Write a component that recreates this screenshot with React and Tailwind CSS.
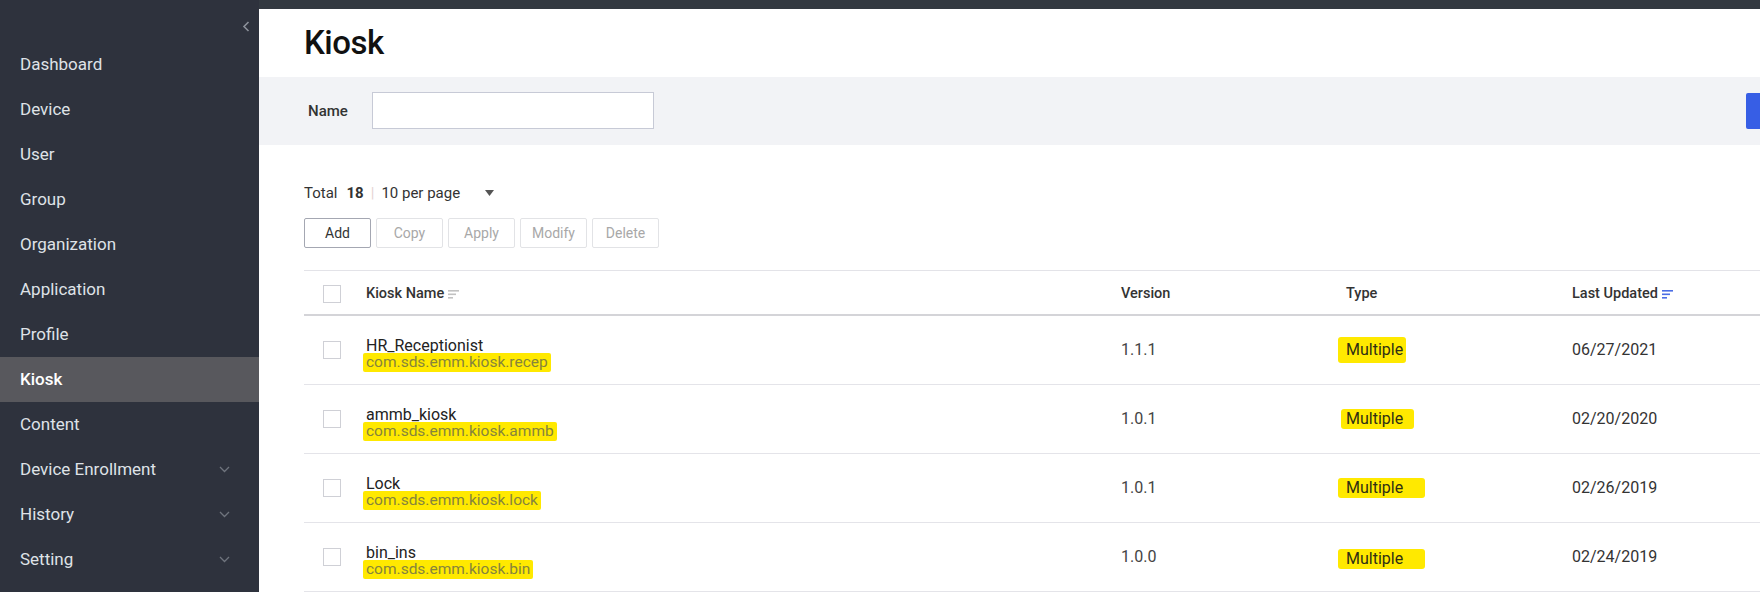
import React from 'react'

const menu = [
  { label: 'Dashboard' },
  { label: 'Device' },
  { label: 'User' },
  { label: 'Group' },
  { label: 'Organization' },
  { label: 'Application' },
  { label: 'Profile' },
  { label: 'Kiosk', active: true },
  { label: 'Content' },
  { label: 'Device Enrollment', sub: true },
  { label: 'History', sub: true },
  { label: 'Setting', sub: true },
]

// hl: marker highlight around "Multiple", drawn by hand in the screenshot
const rows = [
  { name: 'HR_Receptionist', pkg: 'com.sds.emm.kiosk.recep', version: '1.1.1', date: '06/27/2021', hl: 'pl-[8px] pr-[3px] py-[4px] -ml-[8px] mt-[-6px]' },
  { name: 'ammb_kiosk', pkg: 'com.sds.emm.kiosk.ammb', version: '1.0.1', date: '02/20/2020', hl: 'pl-[5px] pr-[11px] py-[1px] -ml-[5px] mt-[2px]' },
  { name: 'Lock', pkg: 'com.sds.emm.kiosk.lock', version: '1.0.1', date: '02/26/2019', hl: 'pl-[8px] pr-[22px] py-[1px] -ml-[8px] mt-[2px]' },
  { name: 'bin_ins', pkg: 'com.sds.emm.kiosk.bin', version: '1.0.0', date: '02/24/2019', hl: 'pl-[8px] pr-[22px] py-[1px] -ml-[8px] mt-[6px]' },
]

const cols = 'grid grid-cols-[62px_755px_225px_226px_1fr]'

function SortIcon({ color }) {
  return (
    <svg width="11" height="10" viewBox="0 0 11 10" className="ml-[4px]">
      <rect x="0" y="1" width="11" height="1.6" fill={color} />
      <rect x="0" y="4.5" width="8" height="1.6" fill={color} />
      <rect x="0" y="8" width="5" height="1.6" fill={color} />
    </svg>
  )
}

function Checkbox() {
  return <div className="w-[18px] h-[18px] border border-[#cfd0d6] bg-white" />
}

export default function App() {
  return (
    <div className="flex w-[1760px] h-[592px] overflow-hidden bg-white font-['Roboto',sans-serif]">
      {/* Sidebar */}
      <aside className="w-[259px] shrink-0 bg-[#2e323d] relative">
        <svg width="8" height="11" viewBox="0 0 8 11" className="absolute left-[242px] top-[21px]">
          <path d="M6.5 1 L2 5.5 L6.5 10" stroke="#8c919a" strokeWidth="1.6" fill="none" />
        </svg>
        <nav className="pt-[42px]">
          {menu.map((m) => (
            <div
              key={m.label}
              className={`h-[45px] flex items-center justify-between pl-[20px] pr-[29px] text-[17px] ${
                m.active ? 'bg-[#58585d] text-white font-medium' : 'text-[#dfe2e7]'
              }`}
            >
              <span>{m.label}</span>
              {m.sub && (
                <svg width="11" height="7" viewBox="0 0 11 7">
                  <path d="M1 1 L5.5 5.5 L10 1" stroke="#6f747d" strokeWidth="1.3" fill="none" />
                </svg>
              )}
            </div>
          ))}
        </nav>
      </aside>

      {/* Main */}
      <main className="flex-1 flex flex-col min-w-0 overflow-hidden">
        <div className="h-[9px] bg-[#333941] shrink-0" />
        <div className="h-[68px] flex items-center pl-[45px]">
          <h1 className="text-[33px] font-medium text-[#111] tracking-[-0.5px]">Kiosk</h1>
        </div>

        {/* Filter */}
        <div className="h-[69px] bg-[#f2f3f6] flex items-center pl-[49px]">
          <span className="text-[15px] font-medium text-[#333] w-[64px]">Name</span>
          <div className="w-[282px] h-[37px] bg-white border border-[#c7cad6]" />
          <div className="flex-1" />
          <div className="w-[60px] h-[36px] bg-[#375ee5] rounded-[2px] mr-[-46px]" />
        </div>

        {/* Toolbar */}
        <div className="pl-[45px] pt-[38px]">
          <div className="flex items-center h-[20px] text-[15px] text-[#333]">
            <span>Total</span>
            <span className="ml-[9px] font-bold">18</span>
            <span className="mx-[7px] text-[#e5d3d3]">|</span>
            <span>10 per page</span>
            <svg width="9" height="6" viewBox="0 0 9 6" className="ml-[25px]">
              <path d="M0 0 H9 L4.5 6 Z" fill="#555" />
            </svg>
          </div>
          <div className="flex gap-[5px] mt-[15px]">
            {['Add', 'Copy', 'Apply', 'Modify', 'Delete'].map((b, i) => (
              <div
                key={b}
                className={`w-[67px] h-[30px] flex items-center justify-center text-[14px] rounded-[2px] border ${
                  i === 0 ? 'border-[#a4a7b2] text-[#333]' : 'border-[#e2e3e6] text-[#a8a8a8]'
                }`}
              >
                {b}
              </div>
            ))}
          </div>
        </div>

        {/* Table */}
        <div className="ml-[45px] mt-[22px]">
          <div className={`${cols} h-[46px] pt-[3px] items-center border-t border-t-[#e3e3e8] border-b-[2px] border-b-[#d4d4d8] text-[14.5px] font-medium text-[#333]`}>
            <div className="pl-[19px]"><Checkbox /></div>
            <div className="flex items-center">Kiosk Name<SortIcon color="#c2c2c2" /></div>
            <div>Version</div>
            <div>Type</div>
            <div className="flex items-center">Last Updated<SortIcon color="#4a6de5" /></div>
          </div>
          {rows.map((r) => (
            <div key={r.name} className={`${cols} h-[69px] items-center border-b border-b-[#e4e4e9] text-[16px]`}>
              <div className="pl-[19px]"><Checkbox /></div>
              <div className="flex flex-col leading-[17px] pt-[8px]">
                <span className="text-[#222]">{r.name}</span>
                <span className="text-[15.5px]">
                  <span className="bg-[#ffe900] text-[#86843c] px-[3px] -ml-[3px] pb-[1px] rounded-[2px]">{r.pkg}</span>
                </span>
              </div>
              <div className="text-[#444]">{r.version}</div>
              <div>
                <span className={`inline-block bg-[#ffe900] text-[#2f2f14] rounded-[3px] leading-[18px] ${r.hl}`}>Multiple</span>
              </div>
              <div className="text-[#333]">{r.date}</div>
            </div>
          ))}
        </div>
      </main>
    </div>
  )
}
